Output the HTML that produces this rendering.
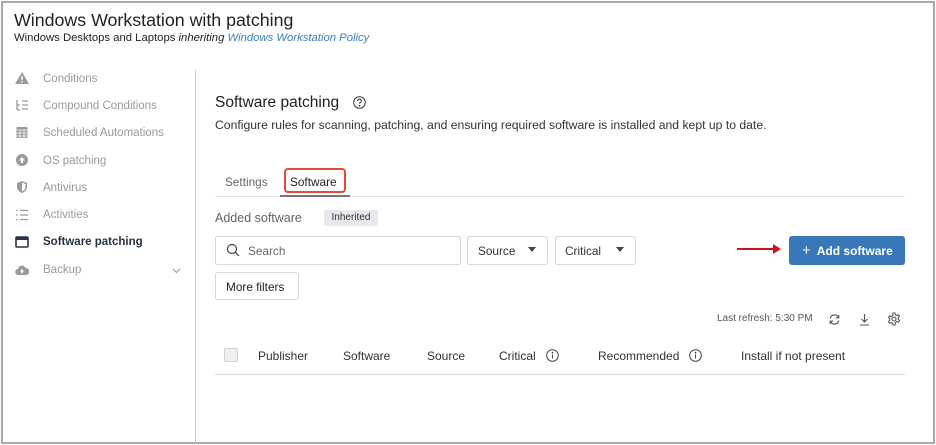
<!DOCTYPE html>
<html><head><style>
*{margin:0;padding:0;box-sizing:border-box}
body{width:936px;height:445px;background:#fff;font-family:"Liberation Sans",sans-serif;position:relative;overflow:hidden;color:#222}
.a{position:absolute;white-space:nowrap}
.frame{position:absolute;left:1px;top:1px;width:934px;height:443px;border:2px solid #a8a8a8}
.nav{font-size:11.5px;color:#9a9a9a;left:43px}
.ic{position:absolute;left:15px;width:14px;height:12px}
.box{position:absolute;border:1px solid #d4d8de;border-radius:3px;background:#fff}
.th{font-size:12px;color:#333;top:349px}
</style></head><body>
<div class="frame"></div>
<div class="a" style="left:14px;top:10px;font-size:17.8px;color:#222">Windows Workstation with patching</div>
<div class="a" style="left:14px;top:32px;font-size:11.3px;color:#222">Windows Desktops and Laptops <i>inheriting</i> <i style="color:#3b82c4">Windows Workstation Policy</i></div>
<div class="a" style="left:195px;top:70px;width:1px;height:375px;background:#c8c8c8"></div>

<svg class="ic" style="top:72px" viewBox="0 0 14 12"><path d="M7 0L14 12H0Z" fill="#9a9a9a"/><rect x="6.3" y="4" width="1.4" height="4" fill="#fff"/><rect x="6.3" y="9" width="1.4" height="1.4" fill="#fff"/></svg>
<div class="a nav" style="top:73px">Conditions</div>
<svg class="ic" style="top:99px" viewBox="0 0 14 12" fill="none" stroke="#9a9a9a" stroke-width="1.3"><path d="M2 1v10M2 6h3M2 11h3M7 2h6M7 6h6M7 10h6"/></svg>
<div class="a nav" style="top:100px">Compound Conditions</div>
<svg class="ic" style="top:126px" viewBox="0 0 14 12"><rect x="1.5" y="1" width="11" height="11" rx="1" fill="#9a9a9a"/><path d="M2 4h10M5 4v8M9 4v8M2 7h10M2 10h10" stroke="#fff" stroke-width=".7"/></svg>
<div class="a nav" style="top:127px">Scheduled Automations</div>
<svg class="ic" style="top:154px" viewBox="0 0 14 12"><circle cx="7" cy="6" r="6" fill="#9a9a9a"/><path d="M7 3L4 6.5h2V9h2V6.5h2Z" fill="#fff"/></svg>
<div class="a nav" style="top:155px">OS patching</div>
<svg class="ic" style="top:181px" viewBox="0 0 14 12"><path d="M7 0L12 2v4c0 3-2.5 5-5 6-2.5-1-5-3-5-6V2Z" fill="#9a9a9a"/><path d="M7 1.5v9c1.8-.9 3.5-2.4 3.5-4.5V3Z" fill="#fff"/></svg>
<div class="a nav" style="top:182px">Antivirus</div>
<svg class="ic" style="top:209px" viewBox="0 0 14 12" stroke="#9a9a9a" stroke-width="1.3"><path d="M1 1.5h1.5M1 6h1.5M1 10.5h1.5M5 1.5h8M5 6h8M5 10.5h8"/></svg>
<div class="a nav" style="top:209px">Activities</div>
<svg class="ic" style="top:236px" viewBox="0 0 14 12"><rect x="1" y="1" width="12" height="10" rx="1" fill="none" stroke="#2a3244" stroke-width="1.6"/><rect x="1" y="1" width="12" height="3" fill="#2a3244"/></svg>
<div class="a nav" style="top:236px;color:#2a3244;font-weight:bold">Software patching</div>
<svg class="ic" style="top:264px" viewBox="0 0 14 12"><path d="M3.5 11a3 3 0 0 1-.5-6 4 4 0 0 1 7.6-1A3.5 3.5 0 0 1 11 11Z" fill="#9a9a9a"/><path d="M7 5L5 7.5h1.3V9.5h1.4V7.5H9Z" fill="#fff"/></svg>
<div class="a nav" style="top:264px">Backup</div>
<svg class="a" style="left:172px;top:268px" width="9" height="6" viewBox="0 0 9 6" fill="none" stroke="#9a9a9a" stroke-width="1.1"><path d="M1 1l3.5 3.5L8 1"/></svg>

<div class="a" style="left:215px;top:94px;font-size:15.5px;color:#222">Software patching</div>
<svg class="a" style="left:353px;top:96px" width="13" height="13" viewBox="0 0 13 13" fill="none" stroke="#333" stroke-width="1"><circle cx="6.5" cy="6.5" r="5.8"/><path d="M4.7 5a1.8 1.8 0 1 1 2.5 1.6c-.5.3-.7.6-.7 1.2"/><circle cx="6.5" cy="9.6" r=".4" fill="#333"/></svg>
<div class="a" style="left:215px;top:118px;font-size:12.2px;color:#333">Configure rules for scanning, patching, and ensuring required software is installed and kept up to date.</div>

<div class="a" style="left:225px;top:175px;font-size:11.8px;color:#666">Settings</div>
<div class="a" style="left:284px;top:168px;width:62px;height:25px;border:2px solid #e8463f;border-radius:4px"></div>
<div class="a" style="left:290px;top:175px;font-size:11.8px;color:#222">Software</div>
<div class="a" style="left:215px;top:196px;width:690px;height:1px;background:#e2e4e8"></div>
<div class="a" style="left:280px;top:195px;width:70px;height:2px;background:#777"></div>

<div class="a" style="left:215px;top:211px;font-size:12.5px;color:#666">Added software</div>
<div class="a" style="left:324px;top:210px;width:54px;height:16px;background:#e6e8ec;border-radius:2px;font-size:10px;color:#333;text-align:center;line-height:16px">Inherited</div>

<div class="box" style="left:215px;top:236px;width:246px;height:29px"></div>
<svg class="a" style="left:226px;top:243px" width="14" height="14" viewBox="0 0 14 14" fill="none" stroke="#444" stroke-width="1.2"><circle cx="6" cy="6" r="4.5"/><path d="M9.3 9.3L13 13"/></svg>
<div class="a" style="left:248px;top:244px;font-size:11.8px;color:#666">Search</div>
<div class="box" style="left:467px;top:236px;width:81px;height:29px"></div>
<div class="a" style="left:478px;top:244px;font-size:11.8px;color:#333">Source</div>
<div class="a" style="left:528px;top:247px;border:4px solid transparent;border-top:5px solid #444;border-bottom:0"></div>
<div class="box" style="left:555px;top:236px;width:81px;height:29px"></div>
<div class="a" style="left:565px;top:244px;font-size:11.8px;color:#333">Critical</div>
<div class="a" style="left:616px;top:247px;border:4px solid transparent;border-top:5px solid #444;border-bottom:0"></div>

<div class="a" style="left:737px;top:248px;width:38px;height:2px;background:#d0121b"></div>
<div class="a" style="left:773px;top:244px;border:5px solid transparent;border-left:8px solid #d0121b;border-right:0"></div>
<div class="a" style="left:789px;top:236px;width:116px;height:29px;background:#3878b8;border-radius:3px;color:#fff;font-size:12px;line-height:29px;font-weight:bold"><span style="font-weight:normal;font-size:15px;margin:0 6px 0 13px">+</span>Add software</div>

<div class="box" style="left:215px;top:272px;width:84px;height:28px"></div>
<div class="a" style="left:226px;top:280px;font-size:11.8px;color:#222">More filters</div>

<div class="a" style="left:717px;top:313px;font-size:10px;color:#555">Last refresh: 5:30 PM</div>
<svg class="a" style="left:828px;top:313px" width="13" height="13" viewBox="0 0 13 13" fill="none" stroke="#555" stroke-width="1.1"><path d="M10.5 4.5A4.3 4.3 0 0 0 2.3 5.5M2.5 8.5a4.3 4.3 0 0 0 8.2-1"/><path d="M10.8 2v2.8H8M2.2 11V8.2H5"/></svg>
<svg class="a" style="left:858px;top:313px" width="13" height="13" viewBox="0 0 13 13" fill="none" stroke="#555" stroke-width="1.1"><path d="M6.5 1v8M3.5 6l3 3 3-3M2 12h9"/></svg>
<svg class="a" style="left:887px;top:312px" width="14" height="14" viewBox="0 0 14 14" fill="none" stroke="#555" stroke-width="1.1"><path d="M6 1h2l.4 1.7 1.5.8 1.6-.7 1 1.7-1.3 1.2v1.6l1.3 1.2-1 1.7-1.6-.7-1.5.8L8 13H6l-.4-1.7-1.5-.8-1.6.7-1-1.7 1.3-1.2V6.7L1.5 5.5l1-1.7 1.6.7 1.5-.8Z"/><circle cx="7" cy="7" r="2"/></svg>

<div class="a" style="left:224px;top:348px;width:14px;height:14px;border:1px solid #d0d0d0;background:#f0f0f0;border-radius:2px"></div>
<div class="a th" style="left:258px">Publisher</div>
<div class="a th" style="left:343px">Software</div>
<div class="a th" style="left:427px">Source</div>
<div class="a th" style="left:499px">Critical</div>
<svg class="a" style="left:546px;top:349px" width="13" height="13" viewBox="0 0 13 13" fill="none" stroke="#444" stroke-width="1"><circle cx="6.5" cy="6.5" r="5.8"/><path d="M6.5 5.5v4"/><circle cx="6.5" cy="3.7" r=".4"/></svg>
<div class="a th" style="left:598px">Recommended</div>
<svg class="a" style="left:689px;top:349px" width="13" height="13" viewBox="0 0 13 13" fill="none" stroke="#444" stroke-width="1"><circle cx="6.5" cy="6.5" r="5.8"/><path d="M6.5 5.5v4"/><circle cx="6.5" cy="3.7" r=".4"/></svg>
<div class="a th" style="left:741px">Install if not present</div>
<div class="a" style="left:215px;top:374px;width:690px;height:1px;background:#d8dbe0"></div>
</body></html>
